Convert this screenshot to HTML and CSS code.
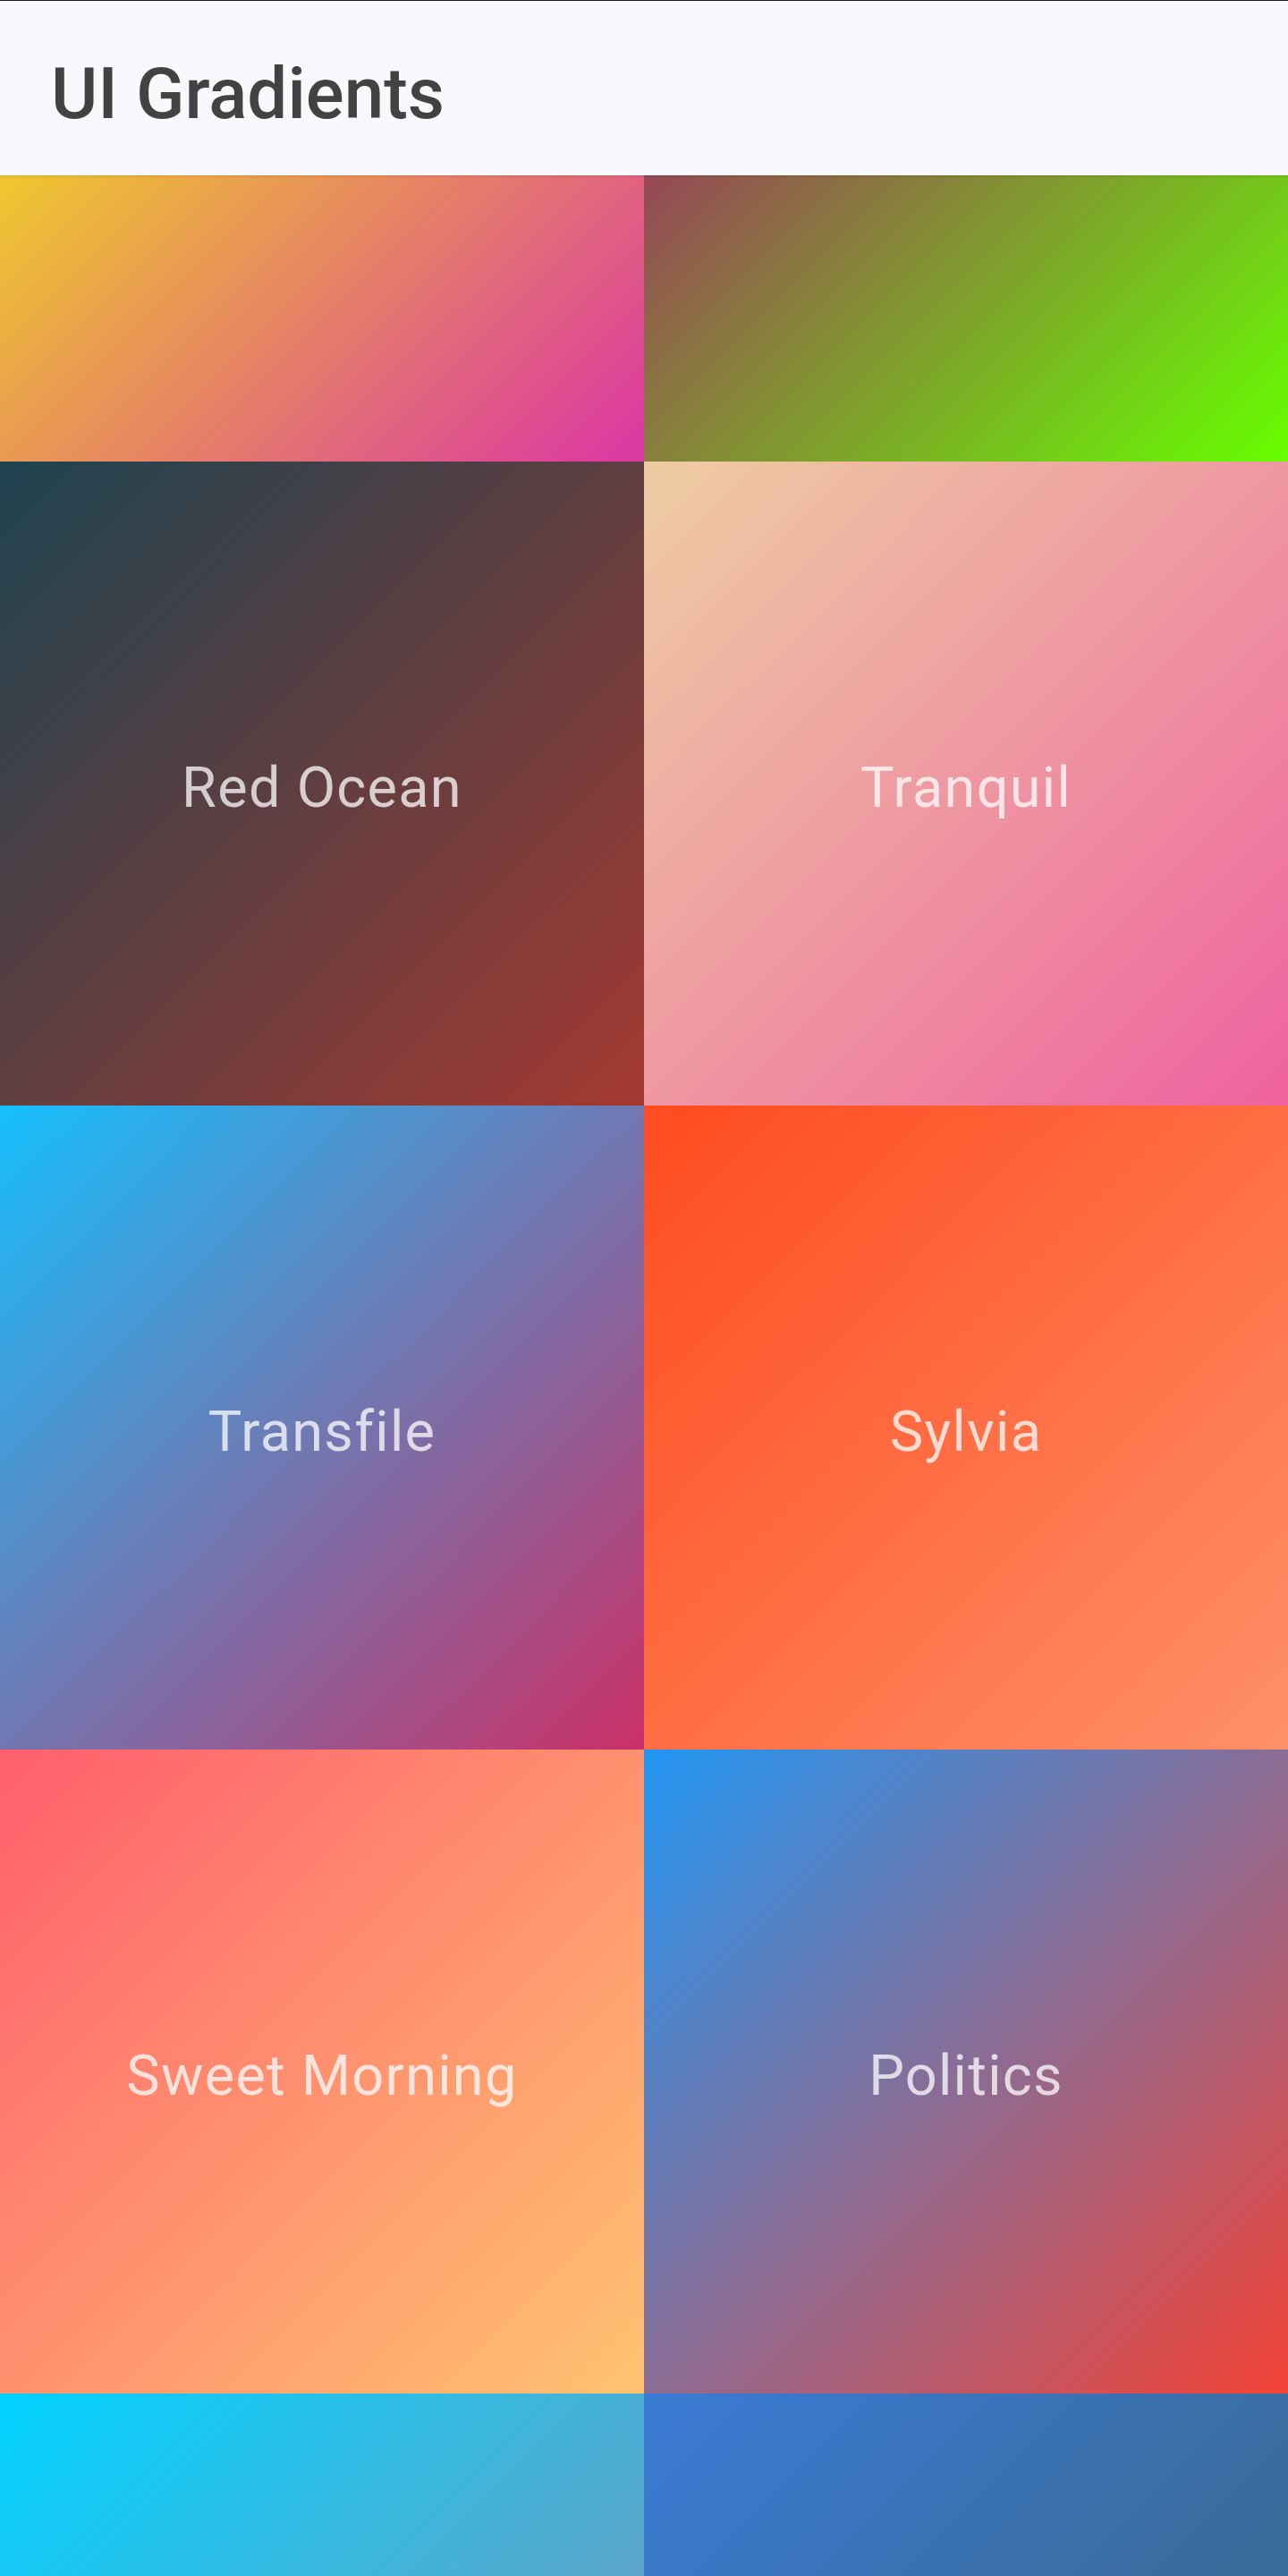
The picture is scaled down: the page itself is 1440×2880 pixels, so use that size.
FILE: index.html
```html
<!DOCTYPE html>
<html lang="en">
<head>
<meta charset="utf-8">
<title>UI Gradients</title>
<link rel="stylesheet" href="styles.css">
</head>
<body>
<div class="app">
  <header class="topbar">
    <h1 class="topbar-title">UI Gradients</h1>
  </header>
  <main class="viewport">
    <div class="grid">
      <div class="tile g-alihossein"><span class="tile-label">Alihossein</span></div>
      <div class="tile g-lemon"><span class="tile-label">Lime Rose</span></div>
      <div class="tile g-red-ocean"><span class="tile-label">Red Ocean</span></div>
      <div class="tile g-tranquil"><span class="tile-label">Tranquil</span></div>
      <div class="tile g-transfile"><span class="tile-label">Transfile</span></div>
      <div class="tile g-sylvia"><span class="tile-label">Sylvia</span></div>
      <div class="tile g-sweet-morning"><span class="tile-label">Sweet Morning</span></div>
      <div class="tile g-politics"><span class="tile-label">Politics</span></div>
      <div class="tile g-bright-vault"><span class="tile-label">Bright Vault</span></div>
      <div class="tile g-reef"><span class="tile-label">Reef</span></div>
    </div>
  </main>
</div>
</body>
</html>
```
FILE: styles.css
```css
html, body {
  margin: 0;
  padding: 0;
  background: #f8f8fc;
}

.app {
  width: 1440px;
  height: 2880px;
  overflow: hidden;
  display: flex;
  flex-direction: column;
  font-family: Roboto, "Noto Sans", sans-serif;
}

.topbar {
  flex: 0 0 auto;
  box-sizing: border-box;
  height: 196px;
  border-top: 1px solid #1f1f1f;
  background: #f9f9fd;
  display: flex;
  align-items: center;
  padding: 12px 56px 0 57px;
  position: relative;
  z-index: 2;
  box-shadow: 0 1px 3px rgba(0, 0, 0, 0.12);
}

.topbar-title {
  margin: 0;
  font-size: 80px;
  font-weight: 500;
  color: #424242;
  letter-spacing: 0;
  line-height: 1;
}

.viewport {
  flex: 1 1 auto;
  overflow: hidden;
}

.grid {
  display: grid;
  grid-template-columns: 720px 720px;
  grid-auto-rows: 720px;
  margin-top: -400px;
}

.tile {
  display: flex;
  align-items: center;
  justify-content: center;
}

.tile-label {
  padding-top: 8px;
  font-size: 63px;
  font-weight: 400;
  letter-spacing: 1.3px;
  color: rgba(255, 255, 255, 0.75);
}

.g-alihossein { background: linear-gradient(135deg, #f7ff00, #db36a4); }
.g-lemon { background: linear-gradient(135deg, #a80077, #66ff00); }
.g-red-ocean { background: linear-gradient(135deg, #1d4350, #a43931); }
.g-tranquil { background: linear-gradient(135deg, #eecda3, #ef629f); }
.g-transfile { background: linear-gradient(135deg, #16bffd, #cb3066); }
.g-sylvia { background: linear-gradient(135deg, #ff4b1f, #ff9068); }
.g-sweet-morning { background: linear-gradient(135deg, #ff5f6d, #ffc371); }
.g-politics { background: linear-gradient(135deg, #2196f3, #f44336); }
.g-bright-vault { background: linear-gradient(135deg, #00d2ff, #928dab); }
.g-reef { background: linear-gradient(135deg, #3a7bd5, #3a6073); }
```
